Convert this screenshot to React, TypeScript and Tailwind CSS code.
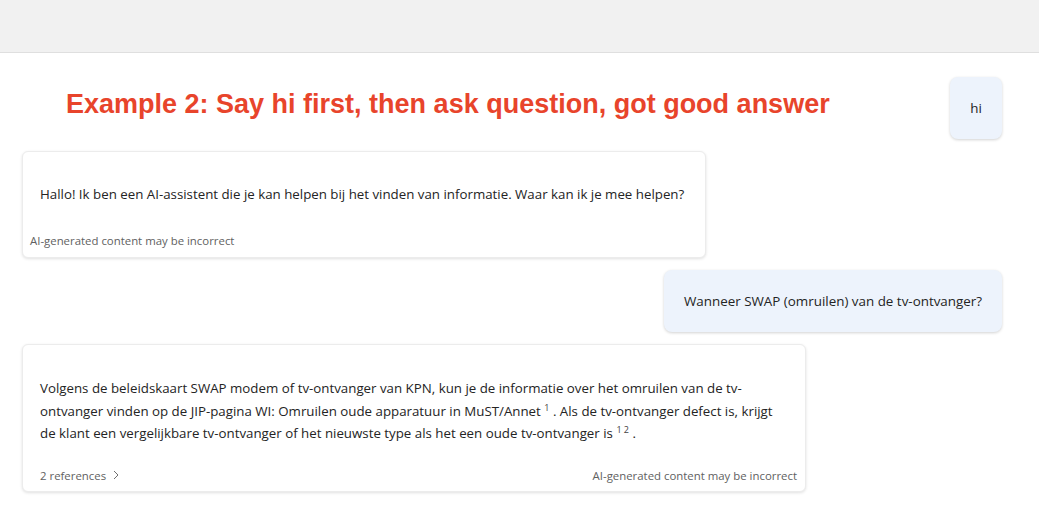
const body = { fontFamily: '"Open Sans", "Noto Sans", sans-serif' }

const Footnote = ({ n }: { n: string }) => (
    <span className="text-[9px] align-[5px] leading-none text-[#424242]">{n}</span>
)

const UserBubble = ({ text, className }: { text: string; className?: string }) => (
    <div
        className={`bg-[#edf3fc] rounded-lg shadow-[0_1px_3px_rgba(0,0,0,0.18)] text-[13.4px] text-[#242424] flex items-center justify-center ${className ?? ''}`}
    >
        {text}
    </div>
)

const App = () => {
    return (
        <div className="w-[1039px] h-[509px] bg-white overflow-hidden" style={body}>
            <div className="h-[53px] bg-[#f1f1f1] border-b border-[#dfdfdf]" />

            <div className="pl-[22px] pr-[37px]">
                <div className="flex items-start justify-between pt-[24px]">
                    <h1
                        className="ml-[44px] mt-[11px] text-[27px] leading-[32px] font-bold text-[#e8442b]"
                        style={{ fontFamily: '"Liberation Sans", Arial, sans-serif' }}
                    >
                        Example 2: Say hi first, then ask question, got good answer
                    </h1>
                    <UserBubble text="hi" className="w-[52px] h-[62px]" />
                </div>

                <div className="mt-[12px] w-[684px] h-[107px] bg-white rounded-md border border-[#ececec] shadow-[0_1px_3px_rgba(0,0,0,0.12)] flex flex-col">
                    <p className="pl-[17px] pt-[33px] text-[13.3px] text-[#242424]">
                        Hallo! Ik ben een AI-assistent die je kan helpen bij het vinden van informatie. Waar kan ik je mee helpen?
                    </p>
                    <div className="mt-auto pl-[7px] pb-[8px] text-[11.4px] text-[#616161]">
                        AI-generated content may be incorrect
                    </div>
                </div>

                <div className="flex justify-end mt-[12px]">
                    <UserBubble text="Wanneer SWAP (omruilen) van de tv-ontvanger?" className="w-[338px] h-[62px]" />
                </div>

                <div className="mt-[12px] w-[784px] h-[148px] bg-white rounded-md border border-[#ececec] shadow-[0_1px_3px_rgba(0,0,0,0.12)] flex flex-col">
                    <p className="pl-[17px] pr-[28px] pt-[32px] text-[13.3px] leading-[22.5px] text-[#242424]">
                        Volgens de beleidskaart SWAP modem of tv-ontvanger van KPN, kun je de informatie over het omruilen van de tv-ontvanger vinden op de JIP-pagina WI: Omruilen oude apparatuur in MuST/Annet{' '}
                        <Footnote n="1" /> . Als de tv-ontvanger defect is, krijgt de klant een vergelijkbare tv-ontvanger of het nieuwste type als het een oude tv-ontvanger is{' '}
                        <Footnote n="1 2" /> .
                    </p>
                    <div className="mt-auto flex items-center justify-between pl-[17px] pr-[8px] pb-[7px] text-[11.4px] text-[#616161]">
                        <span className="flex items-center gap-[6px]">
                            2 references
                            <svg width="8" height="10" viewBox="0 0 8 10" fill="none" stroke="#707070" strokeWidth="1">
                                <path d="M2 1l4 4-4 4" />
                            </svg>
                        </span>
                        <span>AI-generated content may be incorrect</span>
                    </div>
                </div>
            </div>
        </div>
    )
}

export default App
